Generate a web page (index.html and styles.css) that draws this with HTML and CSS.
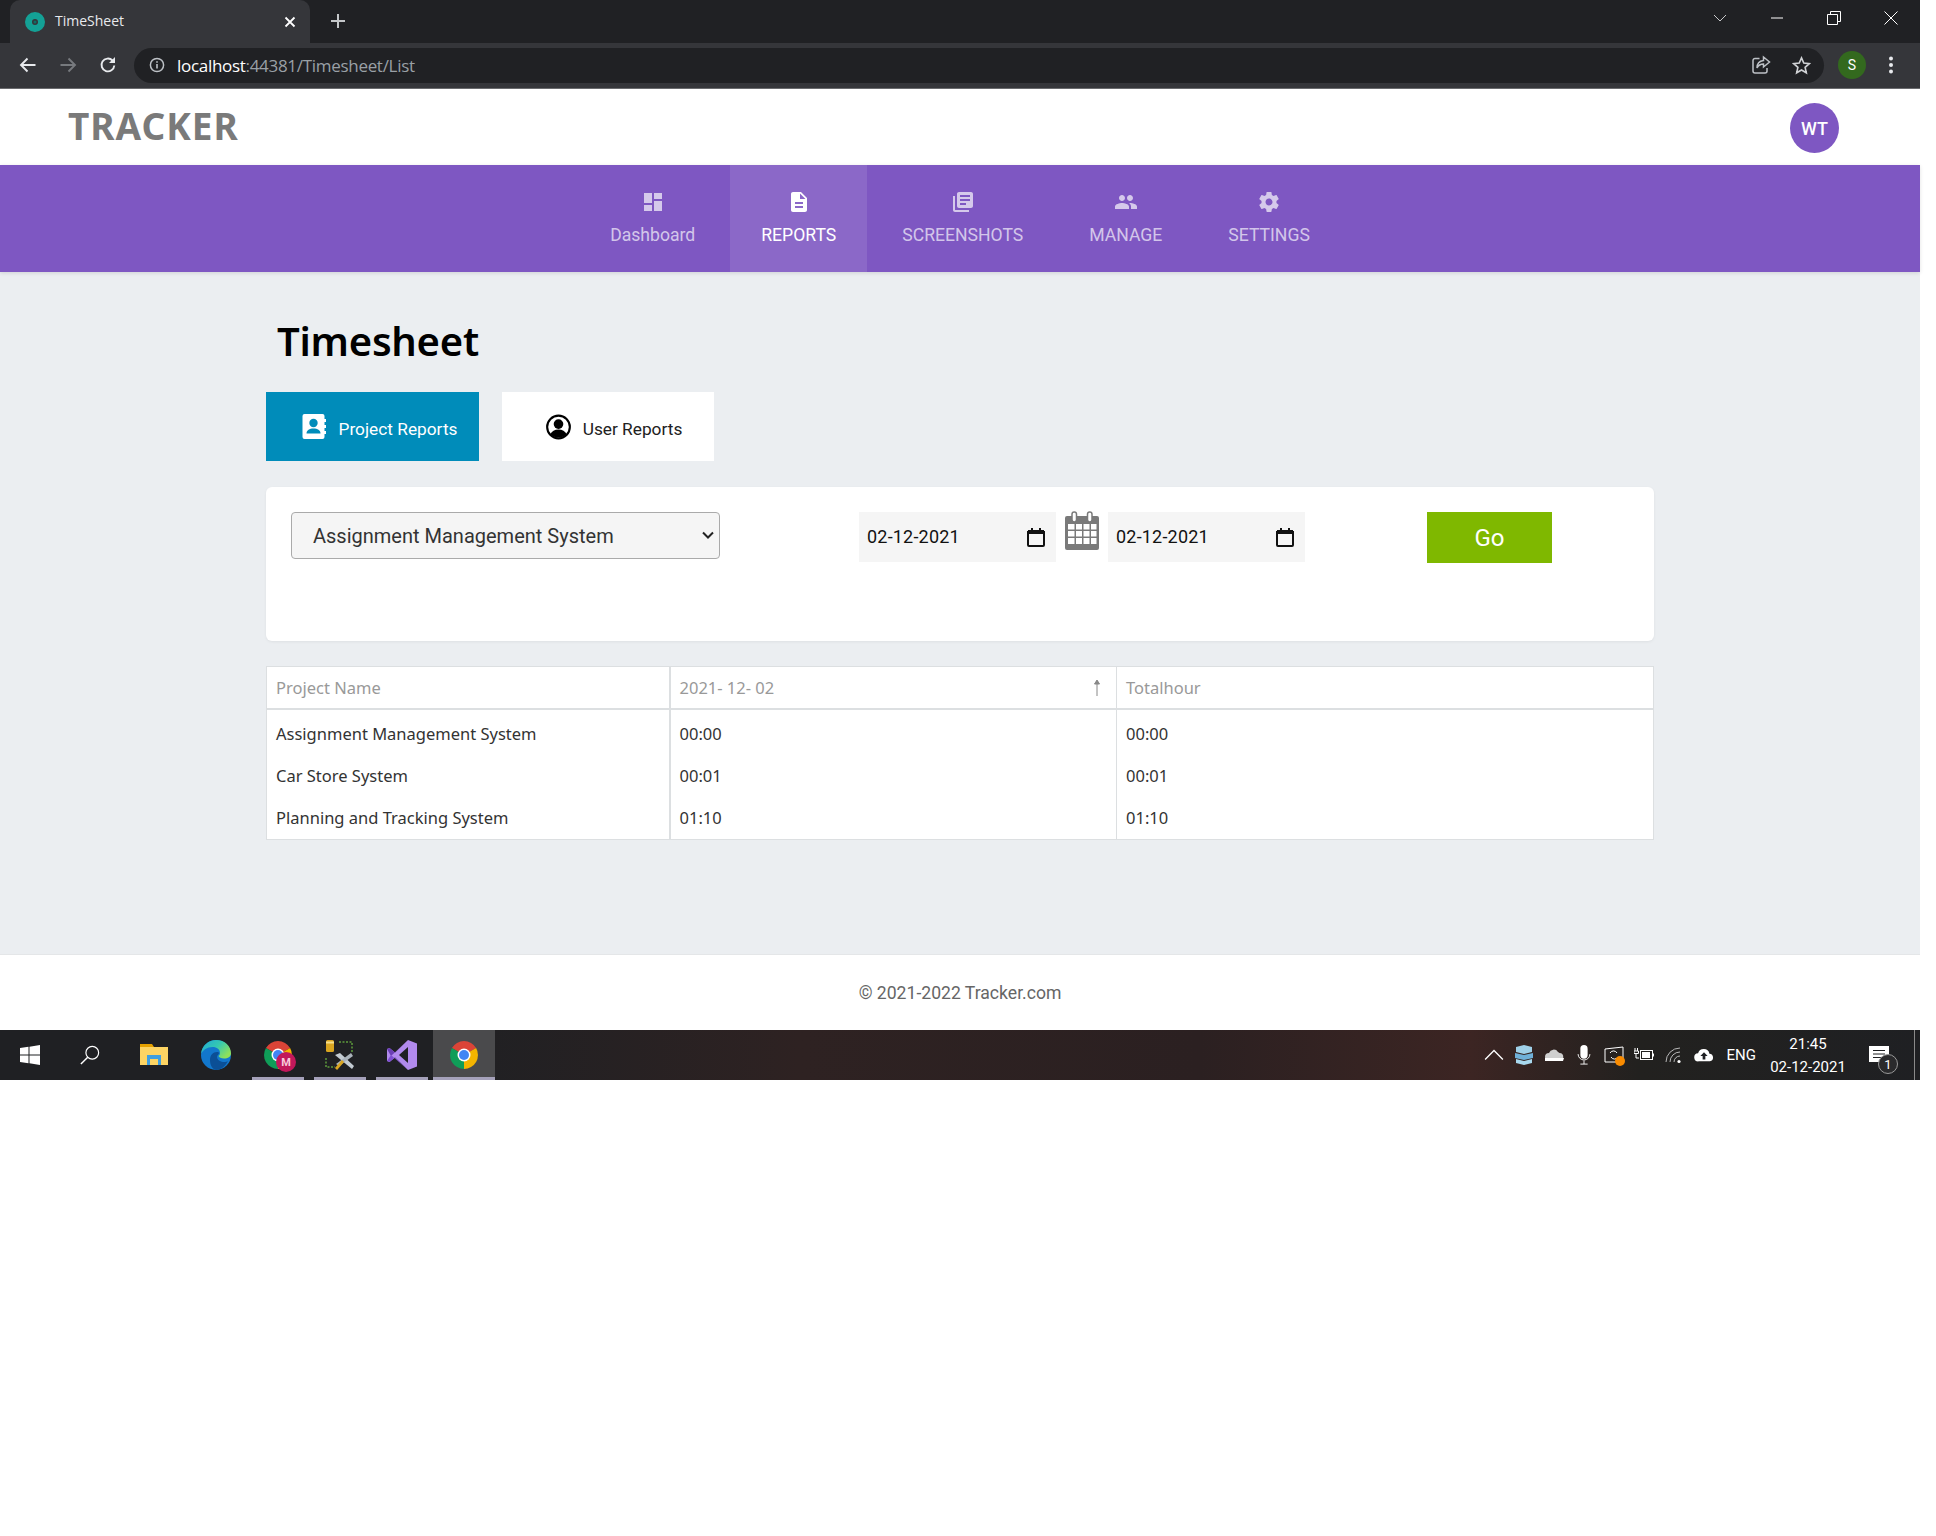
FILE: index.html
```html
<!DOCTYPE html>
<html lang="en">
<head>
  <meta charset="UTF-8">
  <title>TimeSheet</title>
  <link rel="stylesheet" href="styles.css">
</head>
<body>
<div class="screen">

  <div class="tabstrip">
    <div class="tab">
      <svg class="favicon" viewBox="0 0 20 20"><circle cx="10" cy="10" r="6.5" fill="none" stroke="#14a196" stroke-width="7"/><circle cx="10" cy="10" r="1.5" fill="#0d6f68"/></svg>
      <span class="tab-title">TimeSheet</span>
      <svg class="tab-close" viewBox="0 0 12 12"><path d="M1.5 1.5l9 9M10.5 1.5l-9 9" stroke="#fff" stroke-width="1.8" fill="none"/></svg>
    </div>
    <svg class="tab-new" viewBox="0 0 16 16"><path d="M8 1v14M1 8h14" stroke="#c4c7c9" stroke-width="2" fill="none"/></svg>
    <div class="win-controls">
      <svg viewBox="0 0 14 8" class="win-chevron"><path d="M1 1l6 6 6-6" stroke="#c8c9cb" fill="none"/></svg>
      <svg viewBox="0 0 14 14" class="win-min"><path d="M1 7h12" stroke="#fff" fill="none"/></svg>
      <svg viewBox="0 0 14 14" class="win-restore"><path d="M.5 3.500h10v10H.5zM3.500 3.500v-3h10v10h-3" stroke="#fff" fill="none"/></svg>
      <svg viewBox="0 0 14 14" class="win-close"><path d="M.5.5l13 13M13.500.5l-13 13" stroke="#fff" fill="none"/></svg>
    </div>
  </div>

  <div class="toolbar">
    <svg class="tb-icon" viewBox="0 0 18 18"><path d="M16.500 9H2.500M8.500 2.500L2 9l6.500 6.500" stroke="#e8eaed" stroke-width="1.900" fill="none"/></svg>
    <svg class="tb-icon" viewBox="0 0 18 18"><path d="M1.500 9h14M9.500 2.500L16 9l-6.500 6.500" stroke="#777a7e" stroke-width="1.900" fill="none"/></svg>
    <svg class="tb-icon tb-reload" viewBox="0 0 18 18"><path d="M15.300 9.500A6.400 6.400 0 1 1 13.500 4.500" stroke="#e8eaed" stroke-width="1.900" fill="none"/><path d="M16 1v6h-6z" fill="#e8eaed"/></svg>
    <div class="omnibox">
      <svg class="omni-info" viewBox="0 0 16 16"><circle cx="8" cy="8" r="6.600" stroke="#bdc1c6" stroke-width="1.500" fill="none"/><path d="M8 7v4.500M8 4.300v1.500" stroke="#bdc1c6" stroke-width="1.600"/></svg>
      <span class="url"><span class="url-host">localhost</span>:44381/Timesheet/List</span>
      <svg class="omni-share" viewBox="0 0 20 20"><path d="M8.500 3.500H4a2 2 0 0 0-2 2V16a2 2 0 0 0 2 2h10a2 2 0 0 0 2-2v-3" stroke="#bdc1c6" stroke-width="1.500" fill="none"/><path d="M12.500 2l6 5-6 5V9c-3 0-5 1-6.500 4 0-4 2.500-7 6.500-7.500z" stroke="#bdc1c6" stroke-width="1.500" fill="none"/></svg>
      <svg class="omni-star" viewBox="0 0 20 20"><path d="M10 2l2.400 5.400 5.800.6-4.400 3.900 1.300 5.800L10 14.700l-5.100 3 1.300-5.800L1.800 8l5.800-.6z" stroke="#d0d2d5" stroke-width="1.700" fill="none"/></svg>
    </div>
    <div class="profile">S</div>
    <svg class="tb-menu" viewBox="0 0 6 20"><circle cx="3" cy="3.500" r="2" fill="#e8eaed"/><circle cx="3" cy="10" r="2" fill="#e8eaed"/><circle cx="3" cy="16.500" r="2" fill="#e8eaed"/></svg>
  </div>

  <header class="topbar">
    <div class="brand">TRACKER</div>
    <div class="avatar">WT</div>
  </header>

  <nav class="mainnav">
    <a class="nav-item">
      <svg viewBox="0 0 24 24"><path d="M3 13h8V3H3v10zm0 8h8v-6H3v6zm10 0h8V11h-8v10zm0-18v6h8V3h-8z"/></svg>
      <span>Dashboard</span>
    </a>
    <a class="nav-item active">
      <svg viewBox="0 0 24 24"><path d="M14 2H6c-1.100 0-1.990.9-1.990 2L4 20c0 1.100.89 2 1.990 2H18c1.100 0 2-.9 2-2V8l-6-6zm2 16H8v-2h8v2zm0-4H8v-2h8v2zm-3-5V3.500L18.500 9H13z"/></svg>
      <span>REPORTS</span>
    </a>
    <a class="nav-item">
      <svg viewBox="0 0 24 24"><path d="M4 6H2v14c0 1.100.9 2 2 2h14v-2H4V6zm16-4H8c-1.100 0-2 .9-2 2v12c0 1.100.9 2 2 2h12c1.100 0 2-.9 2-2V4c0-1.100-.9-2-2-2zm-1 9H9V9h10v2zm-4 4H9v-2h6v2zm4-8H9V5h10v2z"/></svg>
      <span>SCREENSHOTS</span>
    </a>
    <a class="nav-item">
      <svg viewBox="0 0 24 24"><path d="M16 11c1.660 0 2.990-1.340 2.990-3S17.660 5 16 5c-1.660 0-3 1.340-3 3s1.340 3 3 3zm-8 0c1.660 0 2.990-1.340 2.990-3S9.660 5 8 5C6.340 5 5 6.340 5 8s1.340 3 3 3zm0 2c-2.330 0-7 1.170-7 3.500V19h14v-2.500c0-2.330-4.670-3.500-7-3.500zm8 0c-.29 0-.62.02-.97.05 1.160.84 1.970 1.970 1.970 3.450V19h6v-2.500c0-2.330-4.670-3.500-7-3.500z"/></svg>
      <span>MANAGE</span>
    </a>
    <a class="nav-item">
      <svg viewBox="0 0 24 24"><path d="M19.430 12.980c.04-.32.07-.64.07-.98s-.03-.66-.07-.98l2.110-1.650c.19-.15.24-.42.12-.64l-2-3.460c-.12-.22-.39-.3-.61-.22l-2.490 1c-.52-.4-1.080-.73-1.690-.98l-.38-2.650C14.460 2.180 14.250 2 14 2h-4c-.25 0-.46.18-.49.42l-.38 2.650c-.61.25-1.170.59-1.690.98l-2.490-1c-.23-.09-.49 0-.61.22l-2 3.460c-.13.22-.07.49.12.64l2.110 1.650c-.04.32-.07.65-.07.98s.03.66.07.98l-2.110 1.650c-.19.15-.24.42-.12.64l2 3.460c.12.22.39.3.61.22l2.490-1c.52.4 1.080.73 1.690.98l.38 2.650c.03.24.24.42.49.42h4c.25 0 .46-.18.49-.42l.38-2.650c.61-.25 1.170-.59 1.690-.98l2.490 1c.23.09.49 0 .61-.22l2-3.460c.12-.22.07-.49-.12-.64l-2.110-1.650zM12 15.500c-1.930 0-3.500-1.570-3.500-3.500s1.570-3.500 3.500-3.500 3.500 1.570 3.500 3.500-1.570 3.500-3.500 3.500z"/></svg>
      <span>SETTINGS</span>
    </a>
  </nav>

  <main class="content">
    <div class="wrap">
      <h1 class="page-title">Timesheet</h1>

      <div class="report-tabs">
        <button class="report-tab selected">
          <svg class="rt-icon" viewBox="0 0 24 26"><path d="M2 0h18a2 2 0 0 1 2 2v3h1.500v3H22v3h1.500v3H22v3h1.500v3H22v3a2 2 0 0 1-2 2H2a2 2 0 0 1-2-2V2a2 2 0 0 1 2-2z" fill="#fff"/><circle cx="11" cy="9" r="4.200" fill="#008cba"/><path d="M4 19.500c0-3.500 3-5 7-5s7 1.500 7 5z" fill="#008cba"/></svg>
          <span class="rt-label">Project Reports</span>
        </button>
        <button class="report-tab">
          <svg class="rt-icon" viewBox="0 0 26 26"><circle cx="13" cy="13" r="11.800" fill="#fff" stroke="#000" stroke-width="2.200"/><circle cx="13" cy="10" r="5" fill="#000"/><path d="M4.500 20.500c1.500-3.500 4.500-5 8.500-5s7 1.500 8.500 5A12 12 0 0 1 13 24a12 12 0 0 1-8.500-3.500z" fill="#000"/></svg>
          <span class="rt-label">User Reports</span>
        </button>
      </div>

      <section class="filter-card">
        <div class="select-wrap">
          <select class="project-select">
            <option>Assignment Management System</option>
            <option>Car Store System</option>
            <option>Planning and Tracking System</option>
          </select>
          <svg class="select-arrow" viewBox="0 0 12 8"><path d="M1 1.500l5 5 5-5" stroke="#222" stroke-width="2" fill="none"/></svg>
        </div>
        <div class="date-range">
          <div class="date-field">
            <span>02-12-2021</span>
            <svg viewBox="0 0 18 20"><path d="M1 5h16v13a1 1 0 0 1-1 1H2a1 1 0 0 1-1-1z" fill="none" stroke="#111" stroke-width="2"/><path d="M1 3h16v4H1zM4 1h2v3H4zM12 1h2v3h-2z" fill="#111"/></svg>
          </div>
          <svg class="cal-icon" viewBox="0 0 36 40">
            <path d="M3 5h30a2 2 0 0 1 2 2v30a2 2 0 0 1-2 2H3a2 2 0 0 1-2-2V7a2 2 0 0 1 2-2z" fill="#7a7a7a"/>
            <path d="M4 13h6.500v5.500H4zM12 13h6v5.500h-6zM19.500 13h6v5.500h-6zM27 13h5.500v5.500H27zM4 20h6.500v5.500H4zM12 20h6v5.500h-6zM19.500 20h6v5.500h-6zM27 20h5.500v5.500H27zM4 27h6.500v6H4zM12 27h6v6h-6zM19.500 27h6v6h-6zM27 27h5.500v6H27z" fill="#fff"/>
            <rect x="8" y="1" width="4.500" height="10" rx="2.200" fill="#fff" stroke="#7a7a7a" stroke-width="1.500"/>
            <rect x="23.500" y="1" width="4.500" height="10" rx="2.200" fill="#fff" stroke="#7a7a7a" stroke-width="1.500"/>
          </svg>
          <div class="date-field">
            <span>02-12-2021</span>
            <svg viewBox="0 0 18 20"><path d="M1 5h16v13a1 1 0 0 1-1 1H2a1 1 0 0 1-1-1z" fill="none" stroke="#111" stroke-width="2"/><path d="M1 3h16v4H1zM4 1h2v3H4zM12 1h2v3h-2z" fill="#111"/></svg>
          </div>
        </div>
        <button class="go-btn">Go</button>
      </section>

      <table class="report-table">
        <thead>
          <tr>
            <th class="col-name">Project Name</th>
            <th class="col-date">2021- 12- 02<svg class="sort-arrow" viewBox="0 0 8 18"><path d="M4 17V2M1.500 5L4 1l2.500 4z" stroke="#888" fill="#888"/></svg></th>
            <th>Totalhour</th>
          </tr>
        </thead>
        <tbody>
          <tr><td>Assignment Management System</td><td>00:00</td><td>00:00</td></tr>
          <tr><td>Car Store System</td><td>00:01</td><td>00:01</td></tr>
          <tr><td>Planning and Tracking System</td><td>01:10</td><td>01:10</td></tr>
        </tbody>
      </table>
    </div>
  </main>

  <footer class="page-footer">© 2021-2022 Tracker.com</footer>

  <div class="taskbar">
    <div class="task-cell wide">
      <svg viewBox="0 0 20 20" class="ico-20"><path d="M0 3l8.500-1.200V9.500H0zM9.500 1.700L20 0v9.500H9.500zM0 10.500h8.500v7.700L0 17zM9.500 10.500H20V20L9.500 18.300z" fill="#fff"/></svg>
    </div>
    <div class="task-cell wide">
      <svg viewBox="0 0 22 22" class="ico-20"><circle cx="13.500" cy="8.500" r="7" fill="none" stroke="#fff" stroke-width="1.300"/><path d="M8.500 13.500L1 21" stroke="#fff" stroke-width="1.600"/></svg>
    </div>
    <div class="task-cell first">
      <svg viewBox="0 0 28 24" class="ico-28"><path d="M0 1h12l2 3H0z" fill="#e5a100"/><path d="M0 4h28v18H0z" fill="#fdd463"/><path d="M7 12h14v10h-3v-6h-8v6H7z" fill="#3f9fe0"/></svg>
    </div>
    <div class="task-cell">
      <svg viewBox="0 0 30 30" class="ico-30">
        <defs><linearGradient id="edge-a" x1="0" y1="0" x2="1" y2=".6"><stop offset="0" stop-color="#1fa8d8"/><stop offset=".55" stop-color="#35c9b0"/><stop offset="1" stop-color="#8fe05a"/></linearGradient></defs>
        <circle cx="15" cy="15" r="15" fill="#1277cc"/>
        <path d="M0 14C1 5 8 0 15 0c9 0 15 6 15 13.500 0 3-3 5-7 5-3 0-5-1-5.500-2.500 1-.8 1.500-1.800 1.500-3 0-3.500-3-6-7.500-6C6 7 2 10 0 14z" fill="url(#edge-a)"/>
        <path d="M9 20c0-5 3-8 7-8 1.500 0 2 .5 2 1 0 1.500-2 2-2 4 0 3 4 5 7 5 1.500 0 3-.3 4-1-2.500 5-7 9-12 9-4-1-6-5-6-10z" fill="#0b4f96"/>
      </svg>
    </div>
    <div class="task-cell">
      <span class="chrome-wrap">
        <svg viewBox="0 0 28 28" class="ico-28"><path d="M14 14L1.900 7A14 14 0 0 1 26.100 7z" fill="#db4437"/><path d="M14 14L26.100 7A14 14 0 0 1 14 28z" fill="#f4b400"/><path d="M14 14L14 28A14 14 0 0 1 1.900 7z" fill="#0f9d58"/><circle cx="14" cy="14" r="6.500" fill="#fff"/><circle cx="14" cy="14" r="5" fill="#4285f4"/></svg>
        <span class="chrome-badge">M</span>
      </span>
    </div>
    <div class="task-cell">
      <svg viewBox="0 0 30 30" class="ico-30">
        <rect x="1" y="0" width="8" height="12" rx="1.500" fill="#d9a520"/>
        <path d="M1 2.500h8" stroke="#f7df8a" stroke-width="2"/>
        <path d="M14 2h13v11M1 18v9h9" stroke="#5d9a3c" stroke-width="1.500" stroke-dasharray="2 1.500" fill="none"/>
        <path d="M10 15l5-2 14 13-2 3z" fill="#c3cbd2"/>
        <path d="M26 13l2 3-14 10-3-2z" fill="#aab3bb"/>
        <path d="M11 29l7-8" stroke="#d9a520" stroke-width="2.800"/>
      </svg>
    </div>
    <div class="task-cell">
      <svg viewBox="0 0 30 30" class="ico-30"><path d="M21 0l9 3.500v23L21 30 8 17.500 2.500 22 0 21V9l2.500-1L8 12.500z" fill="#b18aed"/><path d="M21 7L12 15l9 8z" fill="#1f2023"/><path d="M21 0L4 16l-4-7 2.500-1L8 12.500z" fill="#6b3fb5"/><path d="M8 17.500L2.500 22 0 21l4-6 17 15z" fill="#7e4fd0"/></svg>
    </div>
    <div class="task-cell current">
      <svg viewBox="0 0 28 28" class="ico-28"><path d="M14 14L1.900 7A14 14 0 0 1 26.100 7z" fill="#db4437"/><path d="M14 14L26.100 7A14 14 0 0 1 14 28z" fill="#f4b400"/><path d="M14 14L14 28A14 14 0 0 1 1.900 7z" fill="#0f9d58"/><circle cx="14" cy="14" r="6.500" fill="#fff"/><circle cx="14" cy="14" r="5" fill="#4285f4"/></svg>
    </div>

    <div class="tray">
      <svg class="tray-icon" viewBox="0 0 18 10"><path d="M1 9l8-8 8 8" stroke="#fff" stroke-width="1.200" fill="none"/></svg>
      <svg class="tray-icon" viewBox="0 0 20 20"><path d="M2 2l8-2 8 2v5l-8 2-8-2z" fill="#9fd0e8"/><path d="M1 8l9 2 9-2v5l-9 2-9-2z" fill="#6fb0d8"/><path d="M2 14l8 2 8-2v4l-8 2-8-2z" fill="#a8d8ee"/></svg>
      <svg class="tray-icon" viewBox="0 0 20 14"><path d="M5 13a4 4 0 0 1 0-8 5 5 0 0 1 9-1 4 4 0 0 1 1.500 1A4 4 0 0 1 15 13z" fill="#cfcfcf"/><path d="M1 13h18l1-3H1z" fill="#fff"/></svg>
      <svg class="tray-icon" viewBox="0 0 20 22"><rect x="6" y="0" width="8" height="15" rx="4" fill="#fff"/><path d="M3.500 10a6.500 6.500 0 0 0 13 0M10 17v4M6 21h8" stroke="#fff" fill="none"/></svg>
      <span class="sync-wrap">
        <svg class="tray-icon" viewBox="0 0 20 20"><path d="M1 4l18-2v15H1z" fill="none" stroke="#fff"/><path d="M6 8a4 4 0 0 1 7 0M14 12a4 4 0 0 1-7 0" stroke="#fff" fill="none"/></svg>
        <i class="sync-dot"></i>
      </span>
      <svg class="tray-icon" viewBox="0 0 20 14"><path d="M1 0v3M3.500 0v3M0 3h4.500v2.500H0zM2 6v4h3" stroke="#fff" fill="none"/><rect x="6.500" y="2.500" width="12" height="9" fill="none" stroke="#fff"/><rect x="8" y="4" width="8" height="6" fill="#fff"/><path d="M19.500 5.500v3" stroke="#fff"/></svg>
      <svg class="tray-icon" viewBox="0 0 20 18"><path d="M2 16a14 14 0 0 1 14-14M6 16a10 10 0 0 1 10-10M10 16a6 6 0 0 1 6-6" stroke="#b8b8b8" fill="none"/><circle cx="15" cy="15.500" r="1.600" fill="#fff"/></svg>
      <svg class="tray-icon" viewBox="0 0 22 14"><path d="M5 14a4.500 4.500 0 0 1-.5-9A6.500 6.500 0 0 1 17 5.500 4.300 4.300 0 0 1 17.500 14z" fill="#fff"/><path d="M11 4l4 4h-2.500v4h-3V8H7z" fill="#1f2023"/></svg>
      <span class="tray-lang">ENG</span>
      <div class="clock"><span>21:45</span><span>02-12-2021</span></div>
      <span class="notify">
        <svg viewBox="0 0 20 18" class="notify-msg"><path d="M0 0h20v16H0z" fill="#fff"/><path d="M4 4.500h12M4 8h12M4 11.500h12" stroke="#1f2023"/></svg>
        <span class="notify-count">1</span>
      </span>
      <i class="show-desktop"></i>
    </div>
  </div>

</div>
</body>
</html>
```

FILE: styles.css
```css
* {
  box-sizing: border-box;
}
body {
  margin: 0;
  background: #fff;
  font-family: Roboto, Arial, sans-serif;
}
.screen {
  width: 1920px;
  height: 1080px;
  display: flex;
  flex-direction: column;
}

/* browser chrome */
.tabstrip {
  height: 43px;
  background: #202124;
  display: flex;
  align-items: flex-end;
  padding-left: 10px;
}
.tab {
  width: 300px;
  height: 43px;
  background: #35363a;
  border-radius: 10px 10px 0 0;
  display: flex;
  align-items: center;
  padding: 0 14px 0 15px;
  gap: 10px;
  color: #e8eaed;
  font: 14px "Open Sans", sans-serif;
}
.favicon {
  width: 20px;
  height: 20px;
}
.tab-title {
  flex: 1;
  padding-bottom: 2px;
}
.tab-close {
  width: 12px;
  height: 12px;
}
.tab-new {
  width: 16px;
  height: 16px;
  margin: 0 0 14px 20px;
}
.win-controls {
  margin-left: auto;
  height: 43px;
  display: flex;
  align-items: center;
  padding-right: 22px;
}
.win-controls svg {
  width: 14px;
  height: 14px;
  margin-bottom: 8px;
  margin-left: 43px;
}
.toolbar {
  height: 46px;
  background: #35363a;
  border-bottom: 1px solid #6a6b6e;
  display: flex;
  align-items: center;
  padding: 0 0 1px 19px;
}
.tb-icon {
  width: 18px;
  height: 18px;
  margin-right: 22px;
}
.tb-reload {
  margin-right: 17px;
}
.omnibox {
  width: 1690px;
  height: 35px;
  border-radius: 18px;
  background: #202124;
  display: flex;
  align-items: center;
  padding: 0 13px 0 15px;
}
.omni-info {
  width: 16px;
  height: 16px;
}
.url {
  flex: 1;
  margin-left: 12px;
  color: #9aa0a6;
  font: 17px "Open Sans", sans-serif;
  letter-spacing: -0.3px;
}
.url-host {
  color: #fff;
}
.omni-share {
  width: 20px;
  height: 20px;
  margin-right: 21px;
}
.omni-star {
  width: 19px;
  height: 19px;
}
.profile {
  width: 28px;
  height: 28px;
  border-radius: 50%;
  background: #33691e;
  color: #fff;
  font-size: 14px;
  display: flex;
  align-items: center;
  justify-content: center;
  margin-left: 14px;
}
.tb-menu {
  width: 6px;
  height: 20px;
  margin-left: 22px;
}

/* app header */
.topbar {
  height: 76px;
  background: #fff;
  display: flex;
  align-items: center;
  justify-content: space-between;
  padding: 0 81px 0 68px;
}
.brand {
  font: 700 37px "Noto Sans", sans-serif;
  color: #7a7a7a;
  letter-spacing: 1px;
  padding-bottom: 3px;
}
.avatar {
  width: 49px;
  height: 50px;
  margin-top: 2px;
  border-radius: 50%;
  background: #7e57c2;
  color: #fff;
  font-size: 18px;
  font-weight: 500;
  display: flex;
  align-items: center;
  justify-content: center;
}
.mainnav {
  height: 107px;
  background: #7e57c2;
  display: flex;
  justify-content: center;
  gap: 4px;
  box-shadow: 0 1px 4px rgba(0,0,0,0.12);
  position: relative;
}
.nav-item {
  padding: 25px 31px 0;
  display: flex;
  flex-direction: column;
  align-items: center;
  color: rgba(255,255,255,0.68);
  font-size: 17.6px;
}
.nav-item svg {
  width: 24px;
  height: 24px;
  fill: rgba(255,255,255,0.68);
  margin-bottom: 11px;
}
.nav-item.active {
  background: #8b68c8;
  color: #fff;
}
.nav-item.active svg {
  fill: #fff;
}

/* page */
.content {
  flex: 1;
  background: #ebeef1;
}
.wrap {
  width: 1388px;
  margin: 0 auto;
}
.page-title {
  margin: 0;
  padding: 41px 0 0 11px;
  height: 120px;
  font: 600 40px/55px "Noto Sans", sans-serif;
  letter-spacing: -0.25px;
  color: #000;
}
.report-tabs {
  display: flex;
  gap: 23px;
}
.report-tab {
  width: 213px;
  height: 69px;
  padding: 0 0 0 12px;
  border: 0;
  background: #fff;
  color: #212121;
  font: 17.3px Roboto, sans-serif;
  display: flex;
  align-items: center;
  justify-content: center;
  gap: 12px;
}
.report-tab + .report-tab {
  width: 212px;
}
.report-tab.selected {
  padding-left: 14px;
  background: #008cba;
  color: #fff;
}
.rt-icon {
  width: 25px;
  height: 26px;
}
.rt-label {
  padding-top: 4px;
}
.filter-card {
  margin-top: 26px;
  height: 154px;
  background: #fff;
  border-radius: 6px;
  box-shadow: 0 1px 3px rgba(0,0,0,0.06);
  display: flex;
  align-items: flex-start;
  padding: 25px 0 0 25px;
}
.select-wrap {
  position: relative;
  display: flex;
}
.project-select {
  appearance: none;
  width: 429px;
  height: 47px;
  padding-left: 21px;
  background: #f5f5f5;
  border: 1px solid #aaa;
  border-radius: 4px;
  color: #333;
  font: 20px Roboto, sans-serif;
}
.select-arrow {
  position: absolute;
  right: 6px;
  top: 19px;
  width: 12px;
  height: 8px;
  pointer-events: none;
}
.date-range {
  margin-left: 139px;
  display: flex;
  gap: 8px;
}
.date-field {
  width: 197px;
  height: 50px;
  background: #f5f5f5;
  display: flex;
  align-items: center;
  justify-content: space-between;
  padding: 0 11px 2px 8px;
  font-size: 18px;
  letter-spacing: 0.2px;
  color: #111;
}
.date-field svg {
  width: 18px;
  height: 20px;
  margin-top: 2px;
}
.cal-icon {
  width: 36px;
  height: 40px;
  margin-top: -1px;
}
.go-btn {
  width: 125px;
  height: 51px;
  margin-left: 122px;
  border: 0;
  background: #7fb800;
  color: #fff;
  font: 24px Roboto, sans-serif;
}
.report-table {
  width: 1388px;
  margin-top: 25px;
  border-collapse: collapse;
  table-layout: fixed;
  background: #fff;
  border: 1px solid #dcdfe1;
  font: 16.5px "Noto Sans", sans-serif;
  color: #333;
}
.report-table th {
  height: 42px;
  padding: 1px 9px 0;
  text-align: left;
  font-weight: 400;
  color: #999;
  border-bottom: 2px solid #dcdfe1;
  border-right: 1px solid #dcdfe1;
}
.report-table th:last-child {
  border-right: 0;
}
.report-table .col-name {
  width: 403px;
  border-right-width: 2px;
}
.col-date {
  width: 447px;
  position: relative;
}
.sort-arrow {
  position: absolute;
  right: 15px;
  top: 12px;
  width: 8px;
  height: 18px;
}
.report-table td {
  height: 42.3px;
  padding: 0 9px;
  border-right: 1px solid #dcdfe1;
}
.report-table td:first-child {
  border-right-width: 2px;
}
.report-table td:last-child {
  border-right: 0;
}
.report-table tbody tr:first-child td {
  height: 46px;
  padding-top: 2px;
}
.page-footer {
  height: 76px;
  background: #fff;
  border-top: 1px solid #e4e6e8;
  display: flex;
  align-items: center;
  justify-content: center;
  color: #666;
  font-size: 17.6px;
}

/* windows taskbar */
.taskbar {
  height: 50px;
  background: linear-gradient(90deg, #1f2023 0, #1f2023 450px, #2e2222 800px, #2b2021 1200px, #3c2523 1470px, #22211f 1640px, #1f2023 1920px);
  display: flex;
  align-items: stretch;
}
.task-cell {
  width: 62px;
  display: flex;
  align-items: center;
  justify-content: center;
  position: relative;
}
.task-cell.wide {
  width: 60px;
}
.task-cell.first {
  margin-left: 3px;
}
.task-cell:nth-child(n+5)::after {
  content: "";
  position: absolute;
  left: 5px;
  right: 5px;
  bottom: 0;
  height: 3px;
  background: #a5a1ba;
}
.task-cell.current {
  background: #4a4a4c;
}
.task-cell.current::after {
  left: 0;
  right: 0;
}
.ico-20 {
  width: 20px;
  height: 20px;
}
.ico-28 {
  width: 28px;
  height: 28px;
}
.ico-30 {
  width: 30px;
  height: 30px;
}
.chrome-wrap {
  position: relative;
  display: flex;
}
.chrome-badge {
  position: absolute;
  right: -4px;
  bottom: -3px;
  width: 20px;
  height: 20px;
  border-radius: 50%;
  background: #c2185b;
  color: #f9c9dc;
  font-size: 11px;
  font-weight: 700;
  display: flex;
  align-items: center;
  justify-content: center;
}
.tray {
  margin-left: auto;
  display: flex;
  align-items: center;
  padding-right: 5px;
  color: #fff;
}
.tray-icon {
  width: 20px;
  height: 20px;
  margin-right: 10px;
}
.sync-wrap {
  position: relative;
  display: flex;
}
.sync-dot {
  position: absolute;
  right: 9px;
  bottom: -1px;
  width: 10px;
  height: 10px;
  border-radius: 50%;
  background: #f98b00;
}
.tray-lang {
  margin-left: 3px;
  font-size: 15px;
}
.clock {
  margin-left: 12px;
  width: 80px;
  display: flex;
  flex-direction: column;
  align-items: center;
  gap: 5px;
  font-size: 15px;
  line-height: 18px;
}
.notify {
  position: relative;
  display: flex;
  margin-left: 21px;
}
.notify-msg {
  width: 20px;
  height: 18px;
}
.notify-count {
  position: absolute;
  left: 9px;
  top: 8px;
  width: 20px;
  height: 20px;
  border-radius: 50%;
  border: 1px solid #999;
  background: #2a2a2c;
  font-size: 13px;
  display: flex;
  align-items: center;
  justify-content: center;
}
.show-desktop {
  width: 1px;
  height: 50px;
  margin-left: 25px;
  background: #8a8a8a;
}
```
